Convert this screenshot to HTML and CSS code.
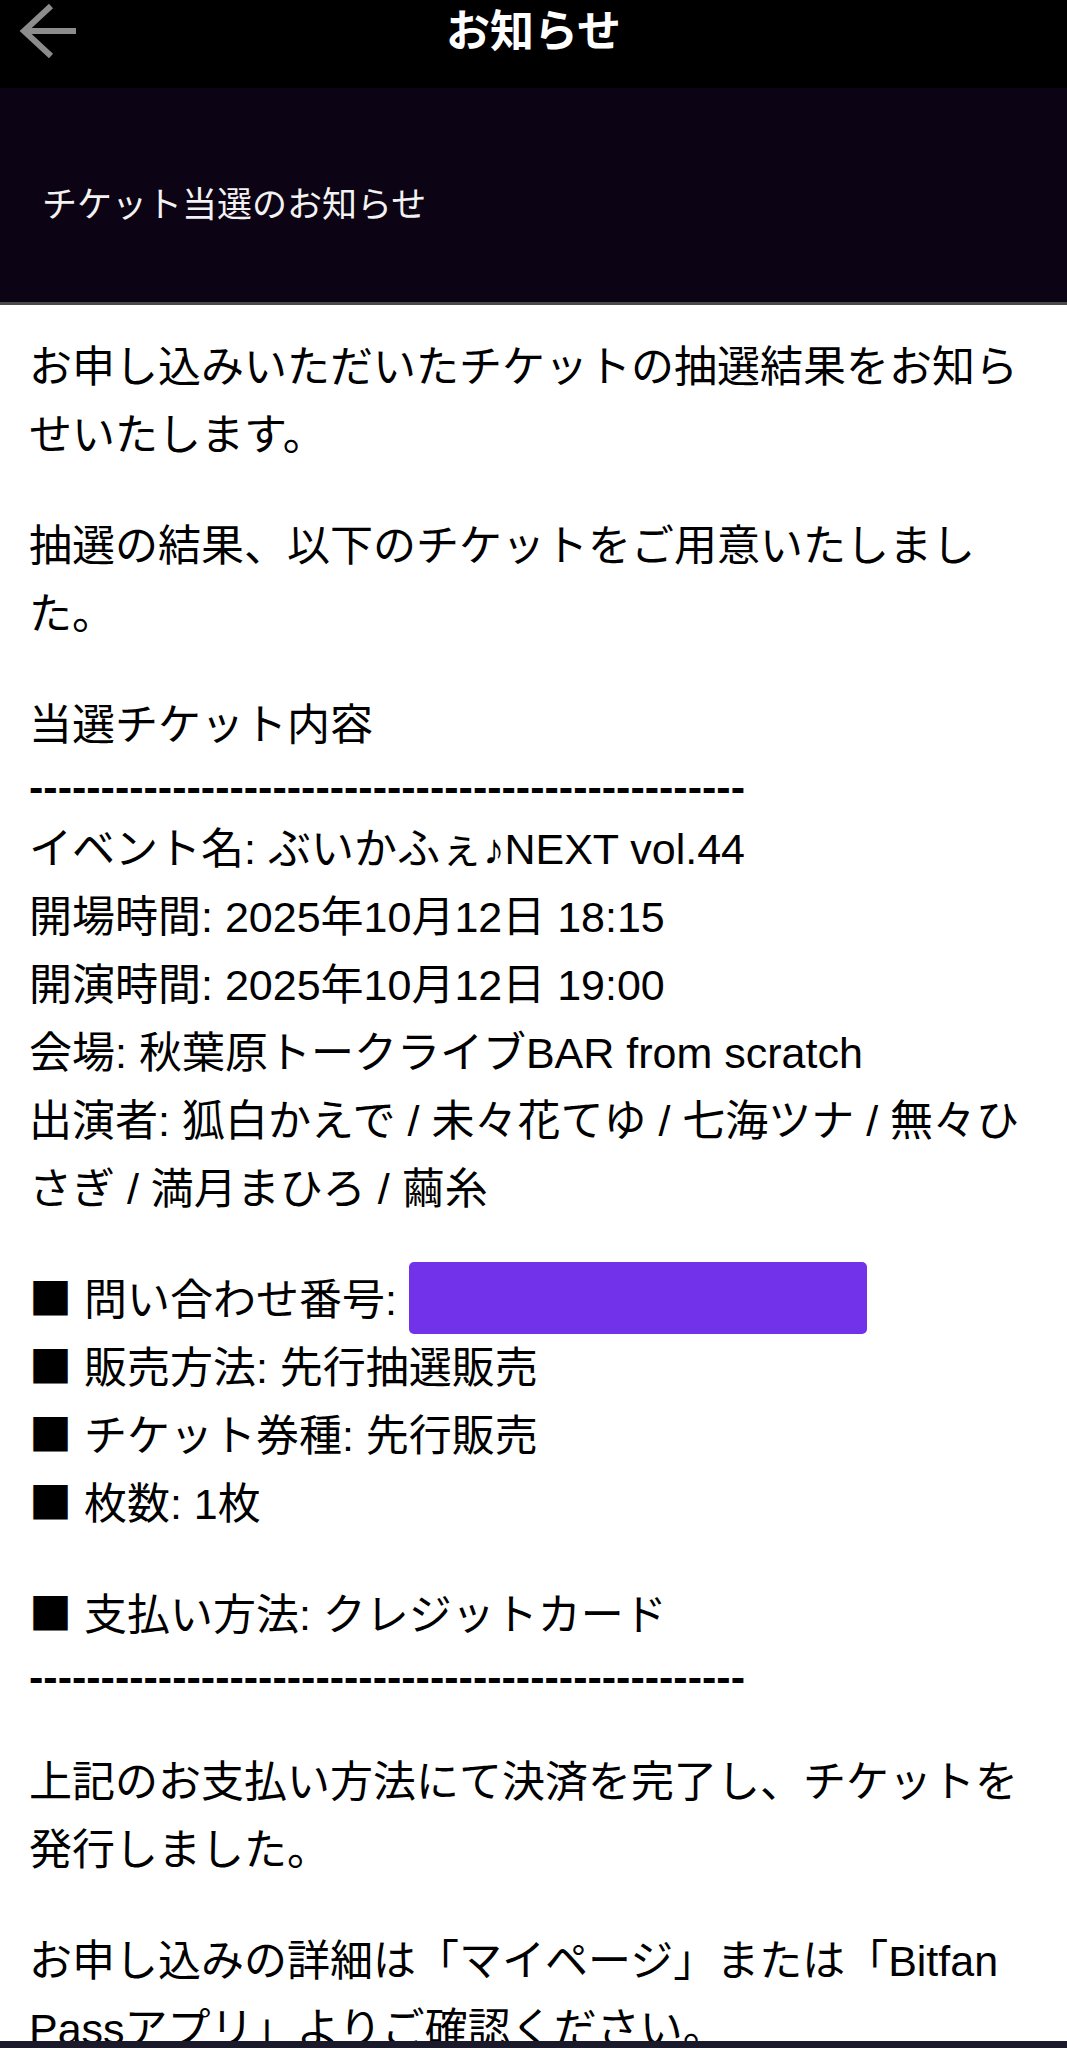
FILE: index.html
```html
<!DOCTYPE html>
<html lang="ja">
<head>
<meta charset="utf-8">
<title>お知らせ</title>
<link rel="stylesheet" href="styles.css">
</head>
<body>
<header class="nav">
  <div class="nav-left">
    <svg class="back" width="90" height="62" viewBox="0 0 90 62" aria-hidden="true">
      <path d="M51 6 L24 31 L51 56 M24 31 H76" fill="none" stroke="#8c8c8c" stroke-width="6" stroke-linejoin="miter"/>
    </svg>
  </div>
  <h1 class="nav-title">お知らせ</h1>
  <div class="nav-right"></div>
</header>
<section class="banner">
  <h2 class="banner-title">チケット当選のお知らせ</h2>
</section>
<main class="content">
  <p class="para">お申し込みいただいたチケットの抽選結果をお知らせいたします。</p>
  <p class="para">抽選の結果、以下のチケットをご用意いたしました。</p>
  <p class="para">当選チケット内容<span class="rule">--------------------------------------------------</span>イベント名: ぶいかふぇ♪NEXT vol.44<br>開場時間: 2025年10月12日 18:15<br>開演時間: 2025年10月12日 19:00<br>会場: 秋葉原トークライブBAR from scratch<br>出演者: 狐白かえで / 未々花てゆ / 七海ツナ / 無々ひさぎ / 満月まひろ / 繭糸</p>
  <p class="para"><span class="sq">■</span> 問い合わせ番号: <span class="redact"></span><br><span class="sq">■</span> 販売方法: 先行抽選販売<br><span class="sq">■</span> チケット券種: 先行販売<br><span class="sq">■</span> 枚数: 1枚</p>
  <p class="para"><span class="sq">■</span> 支払い方法: クレジットカード<span class="rule">--------------------------------------------------</span></p>
  <p class="para">上記のお支払い方法にて決済を完了し、チケットを発行しました。</p>
  <p class="para">お申し込みの詳細は「マイページ」または「Bitfan Passアプリ」よりご確認ください。</p>
</main>
<div class="home-bar"></div>
</body>
</html>
```

FILE: styles.css
```css
html, body {
  margin: 0;
  padding: 0;
  background: #ffffff;
}

body {
  font-family: "Liberation Sans", "Noto Sans CJK JP", sans-serif;
  color: #000000;
}

.nav {
  display: grid;
  grid-template-columns: 1fr auto 1fr;
  align-items: start;
  height: 88px;
  background: #000000;
}

.nav-left {
  display: flex;
}

.back {
  display: block;
}

.nav-title {
  margin: 0;
  font-family: "Noto Sans CJK JP", sans-serif;
  font-weight: 700;
  font-size: 44px;
  line-height: 56px;
  color: #ffffff;
}

.banner {
  background: #0c0314;
  border-bottom: 3px solid #4a4a4a;
  padding: 89px 42px 75px;
}

.banner-title {
  margin: 0;
  font-family: "Noto Sans CJK JP", sans-serif;
  font-weight: 400;
  font-size: 35px;
  line-height: 50px;
  color: #f2f2f2;
}

.content {
  padding: 28px 29px 0;
  font-size: 43px;
  line-height: 68px;
}

.para {
  margin: 0 0 43px;
}

.rule {
  display: block;
  line-height: 56px;
  font-weight: 700;
}

.sq {
  font-family: "Noto Sans CJK JP", sans-serif;
  line-height: 0;
}

.redact {
  display: inline-block;
  width: 458px;
  height: 72px;
  margin: -12px 0 0;
  vertical-align: middle;
  background: #7132ea;
  border-radius: 5px;
}

.home-bar {
  position: fixed;
  left: 0;
  right: 0;
  bottom: 0;
  height: 7px;
  background: #1b1a2a;
}
```
